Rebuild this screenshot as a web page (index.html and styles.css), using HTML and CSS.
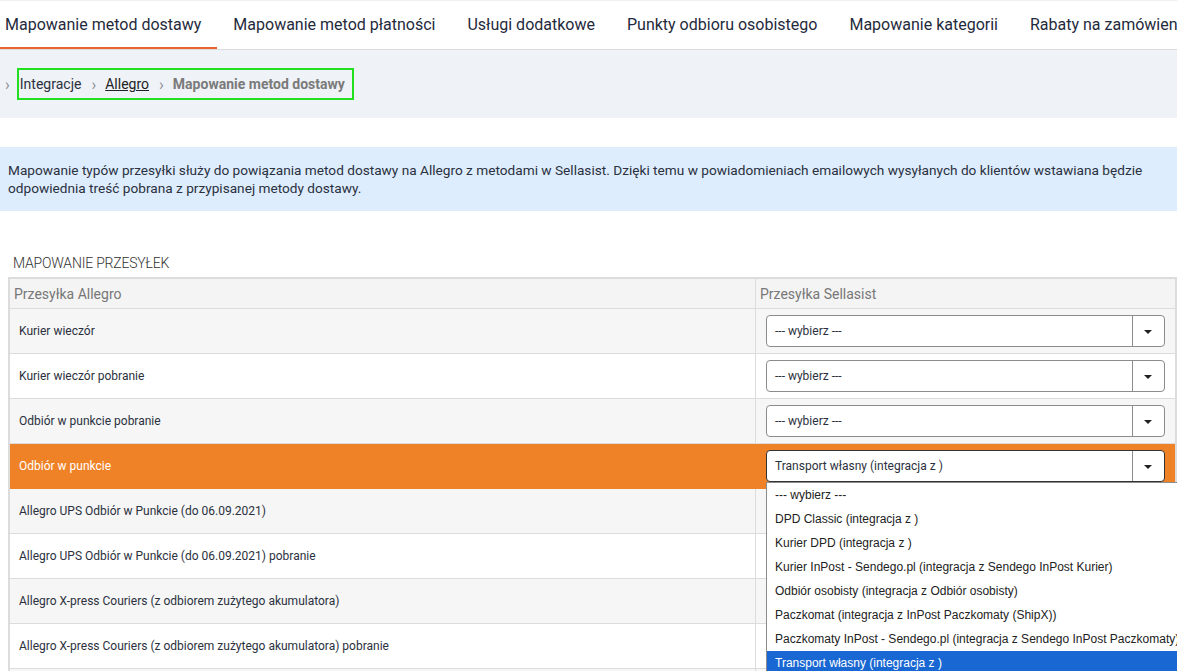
FILE: index.html
```html
<!DOCTYPE html>
<html lang="pl">
<head>
  <meta charset="UTF-8">
  <meta name="viewport" content="width=device-width, initial-scale=1.0">
  <title>Mapowanie metod dostawy</title>
  <link rel="stylesheet" href="styles.css">
</head>
<body>
  <nav class="tabs">
    <a class="tab active" href="#">Mapowanie metod dostawy</a>
    <a class="tab" href="#">Mapowanie metod płatności</a>
    <a class="tab" href="#">Usługi dodatkowe</a>
    <a class="tab" href="#">Punkty odbioru osobistego</a>
    <a class="tab" href="#">Mapowanie kategorii</a>
    <a class="tab" href="#">Rabaty na zamówienia</a>
  </nav>

  <div class="crumbs">
    <span class="sep">&rsaquo;</span>
    <div class="crumbs-box">
      <span class="crumb">Integracje</span>
      <span class="sep">&rsaquo;</span>
      <a class="crumb link" href="#">Allegro</a>
      <span class="sep">&rsaquo;</span>
      <span class="crumb current">Mapowanie metod dostawy</span>
    </div>
  </div>

  <div class="info">
    Mapowanie typów przesyłki służy do powiązania metod dostawy na Allegro z metodami w Sellasist. Dzięki temu w powiadomieniach emailowych wysyłanych do klientów wstawiana będzie odpowiednia treść pobrana z przypisanej metody dostawy.
  </div>

  <h3 class="section-title">MAPOWANIE PRZESYŁEK</h3>

  <table class="mapping">
    <thead>
      <tr>
        <th class="col-allegro">Przesyłka Allegro</th>
        <th>Przesyłka Sellasist</th>
      </tr>
    </thead>
    <tbody>
      <tr>
        <td>Kurier wieczór</td>
        <td class="cell-select"><div class="select"><span class="value">--- wybierz ---</span><span class="arrow"></span></div></td>
      </tr>
      <tr>
        <td>Kurier wieczór pobranie</td>
        <td class="cell-select"><div class="select"><span class="value">--- wybierz ---</span><span class="arrow"></span></div></td>
      </tr>
      <tr>
        <td>Odbiór w punkcie pobranie</td>
        <td class="cell-select"><div class="select"><span class="value">--- wybierz ---</span><span class="arrow"></span></div></td>
      </tr>
      <tr class="selected">
        <td>Odbiór w punkcie</td>
        <td class="cell-select">
          <div class="select open">
            <span class="value">Transport własny (integracja z )</span><span class="arrow"></span>
            <ul class="options">
              <li>--- wybierz ---</li>
              <li>DPD Classic (integracja z )</li>
              <li>Kurier DPD (integracja z )</li>
              <li>Kurier InPost - Sendego.pl (integracja z Sendego InPost Kurier)</li>
              <li>Odbiór osobisty (integracja z Odbiór osobisty)</li>
              <li>Paczkomat (integracja z InPost Paczkomaty (ShipX))</li>
              <li>Paczkomaty InPost - Sendego.pl (integracja z Sendego InPost Paczkomaty)</li>
              <li class="hover">Transport własny (integracja z )</li>
            </ul>
          </div>
        </td>
      </tr>
      <tr>
        <td>Allegro UPS Odbiór w Punkcie (do 06.09.2021)</td>
        <td class="cell-select"><div class="select"><span class="value">--- wybierz ---</span><span class="arrow"></span></div></td>
      </tr>
      <tr>
        <td>Allegro UPS Odbiór w Punkcie (do 06.09.2021) pobranie</td>
        <td class="cell-select"><div class="select"><span class="value">--- wybierz ---</span><span class="arrow"></span></div></td>
      </tr>
      <tr>
        <td>Allegro X-press Couriers (z odbiorem zużytego akumulatora)</td>
        <td class="cell-select"><div class="select"><span class="value">--- wybierz ---</span><span class="arrow"></span></div></td>
      </tr>
      <tr>
        <td>Allegro X-press Couriers (z odbiorem zużytego akumulatora) pobranie</td>
        <td class="cell-select"><div class="select"><span class="value">--- wybierz ---</span><span class="arrow"></span></div></td>
      </tr>
      <tr>
        <td>Allegro Kurier DPD</td>
        <td class="cell-select"><div class="select"><span class="value">--- wybierz ---</span><span class="arrow"></span></div></td>
      </tr>
    </tbody>
  </table>
</body>
</html>
```

FILE: styles.css
```css
html {
  overflow: hidden;
}

body {
  margin: 0;
  font-family: Roboto, "Liberation Sans", Arial, sans-serif;
  color: #2b3140;
  background-color: #fff;
  overflow: hidden;
}

.tabs {
  display: flex;
  white-space: nowrap;
  height: 48px;
  margin-left: -11px;
  border-top: 1px solid #eef0f3;
  border-bottom: 1px solid #dcdcdc;
  background-color: #fff;
}

.tab {
  display: block;
  padding: 0 16px;
  line-height: 47px;
  font-size: 16px;
  color: #1f2a3c;
  text-decoration: none;
  border-bottom: 2px solid transparent;
}

.tab.active {
  border-bottom-color: #e8642c;
}

.crumbs {
  display: flex;
  align-items: center;
  height: 68px;
  padding-left: 5px;
  background-color: #eff2f7;
  font-size: 14px;
}

.crumbs-box {
  display: flex;
  align-items: center;
  height: 28px;
  margin-left: 7px;
  padding: 0 7px 0 1px;
  border: 2px solid #22e01f;
}

.sep {
  color: #8a8f98;
  font-size: 16px;
  margin: 0 9px 0 10px;
}

.crumbs > .sep {
  margin: 0;
}

.crumb {
  color: #2b3140;
}

.crumb.link {
  color: #222;
  text-decoration: underline;
}

.crumb.current {
  color: #7a7a7a;
  font-weight: bold;
}

.info {
  margin-top: 29px;
  padding: 14px 8px;
  background-color: #deedfd;
  font-size: 13.65px;
  line-height: 18px;
  color: #2b3140;
}

.section-title {
  margin: 44px 0 6px 13px;
  font-size: 14px;
  font-weight: 300;
  letter-spacing: -0.2px;
  color: #333;
}

.mapping {
  width: 1169px;
  margin-left: 8px;
  border-collapse: collapse;
  border: 2px solid #dcdcdc;
  font-size: 12px;
}

.mapping th {
  height: 29px;
  padding: 0 4px;
  text-align: left;
  font-size: 14px;
  font-weight: normal;
  color: #777;
  background-color: #f4f4f4;
  border: 1px solid #dcdcdc;
}

.mapping .col-allegro {
  width: 737px;
}

.mapping td {
  height: 44px;
  padding: 0 9px;
  border: 1px solid #dcdcdc;
  background-color: #fff;
}

.mapping tbody tr:nth-child(odd) td {
  background-color: #f6f6f6;
}

.mapping tbody tr.selected td {
  background-color: #ef8226;
  color: #fff;
  border-color: #ef8226;
}

.mapping td.cell-select {
  padding: 0 10px;
}

.select {
  position: relative;
  display: flex;
  align-items: center;
  height: 30px;
  border: 1px solid #8c8c8c;
  border-radius: 4px;
  background-color: #fff;
  color: #2b3140;
}

.select.open {
  border-color: #333;
}

.select .value {
  flex: 1;
  padding-left: 8px;
}

.select .arrow {
  position: relative;
  width: 31px;
  height: 100%;
  border-left: 1px solid #8c8c8c;
}

.select .arrow::after {
  content: "";
  position: absolute;
  left: 11px;
  top: 14px;
  border-left: 4px solid transparent;
  border-right: 4px solid transparent;
  border-top: 4px solid #222;
}

.options {
  position: absolute;
  top: 31px;
  left: -1px;
  width: 440px;
  margin: 0;
  padding: 0;
  list-style: none;
  background-color: #fff;
  border: 1px solid #8c8c8c;
  font-family: "Liberation Sans", Arial, sans-serif;
  font-size: 12px;
  color: #222;
  z-index: 5;
}

.options li {
  height: 24px;
  line-height: 24px;
  padding-left: 8px;
  white-space: nowrap;
}

.options li.hover {
  background-color: #1967d2;
  color: #fff;
}
```
